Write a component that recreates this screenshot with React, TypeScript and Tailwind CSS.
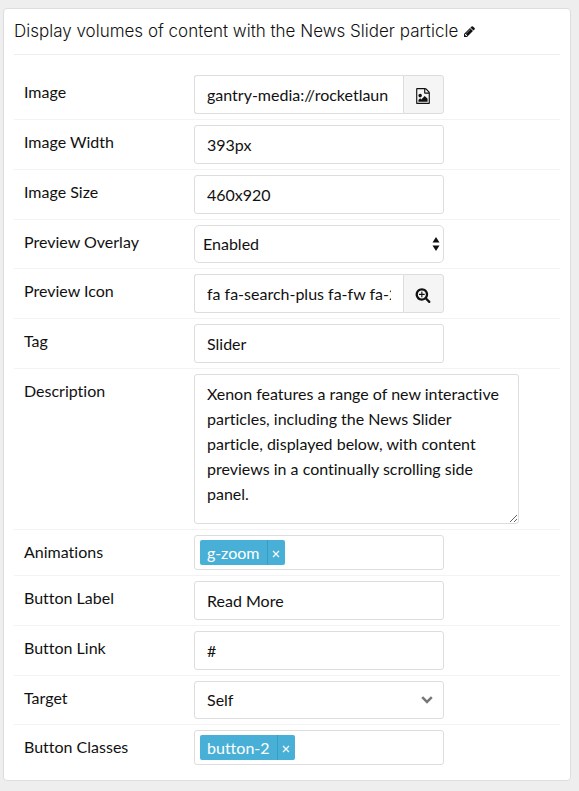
import { useId, type ReactNode } from "react";

const fieldBase =
  "block border border-[#ddd] bg-white text-base text-[#111] outline-none focus:border-[#48b0d7]";

function PencilIcon() {
  return (
    <svg viewBox="0 0 1536 1536" className="size-[11px] fill-current" aria-hidden="true">
      <path d="M363 1408l91-91-235-235-91 91v107h128v128h107zm523-928q0-22-22-22-10 0-17 7l-542 542q-7 7-7 17 0 22 22 22 10 0 17-7l542-542q7-7 7-17zm-54-192l416 416-832 832h-416v-416zm683 96q0 53-37 90l-166 166-416-416 166-165q36-38 90-38 53 0 91 38l235 234q37 39 37 91z" />
    </svg>
  );
}

function FileImageIcon() {
  return (
    <svg viewBox="0 0 1536 1792" className="h-4 w-[14px] fill-current" aria-hidden="true">
      <path d="M1468 380q28 28 48 76t20 88v1152q0 40-28 68t-68 28h-1344q-40 0-68-28t-28-68v-1600q0-40 28-68t68-28h896q40 0 88 20t76 48zm-444-244v376h376q-10-29-22-41l-313-313q-12-12-41-22zm384 1528v-1024h-416q-40 0-68-28t-28-68v-416h-768v1536h1280zm-128-448v320h-1024v-192l192-192 128 128 384-384zm-832-192q-80 0-136-56t-56-136 56-136 136-56 136 56 56 136-56 136-136 56z" />
    </svg>
  );
}

function SearchPlusIcon() {
  return (
    <svg viewBox="0 0 1792 1792" className="size-4 fill-current" aria-hidden="true">
      <path d="M1088 800v64q0 13-9.5 22.5t-22.5 9.5h-224v224q0 13-9.5 22.5t-22.5 9.5h-64q-13 0-22.5-9.5t-9.5-22.5v-224h-224q-13 0-22.5-9.5t-9.5-22.5v-64q0-13 9.5-22.5t22.5-9.5h224v-224q0-13 9.5-22.5t22.5-9.5h64q13 0 22.5 9.5t9.5 22.5v224h224q13 0 22.5 9.5t9.5 22.5zm128 32q0-185-131.5-316.5t-316.5-131.5-316.5 131.5-131.5 316.5 131.5 316.5 316.5 131.5 316.5-131.5 131.5-316.5zm512 832q0 53-37.5 90.5t-90.5 37.5q-54 0-90-38l-343-342q-179 124-399 124-143 0-273.5-55.5t-225-150-150-225-55.5-273.5 55.5-273.5 150-225 225-150 273.5-55.5 273.5 55.5 225 150 150 225 55.5 273.5q0 220-124 399l343 343q37 37 37 90z" />
    </svg>
  );
}

function Row({ label, children }: { label: string; children: (id: string) => ReactNode }) {
  const id = useId();
  return (
    <div className="flex border-b border-[#f3f3f3] py-[5px] last:border-b-0">
      <label htmlFor={id} className="w-[180px] shrink-0 pt-1 pl-[10px] leading-[25px]">
        {label}
      </label>
      <div className="min-w-0 flex-1">{children(id)}</div>
    </div>
  );
}

function TextRow({ label, value }: { label: string; value: string }) {
  return (
    <Row label={label}>
      {(id) => (
        <input
          id={id}
          type="text"
          defaultValue={value}
          className={`${fieldBase} h-[39px] w-full max-w-[250px] rounded-[3px] px-3`}
        />
      )}
    </Row>
  );
}

function PickerRow({
  label,
  value,
  action,
  icon,
}: {
  label: string;
  value: string;
  action: string;
  icon: ReactNode;
}) {
  return (
    <Row label={label}>
      {(id) => (
        <div className="flex w-full max-w-[250px]">
          <input
            id={id}
            type="text"
            defaultValue={value}
            className={`${fieldBase} h-[39px] min-w-0 flex-1 rounded-l-[3px] border-r-0 px-3`}
          />
          <button
            type="button"
            aria-label={action}
            className="flex h-[39px] w-[41px] items-center justify-center rounded-r-[3px] border border-[#ddd] bg-[#f5f5f5] pt-[3px] pr-[2px]"
          >
            {icon}
          </button>
        </div>
      )}
    </Row>
  );
}

function TagsRow({ label, tag }: { label: string; tag: string }) {
  return (
    <Row label={label}>
      {(id) => (
        <div className="flex h-[35px] w-full max-w-[250px] items-center rounded-[3px] border border-[#ddd] px-[5px]">
          <span className="flex h-[25px] shrink-0 rounded-[2px] bg-[#48b0d7] text-white">
            <span className="px-[7px] leading-[25px]">{tag}</span>
            <button
              type="button"
              aria-label={`Remove ${tag}`}
              className="flex w-[18px] items-center justify-center border-l border-[#3a9cc2] pt-[2px]"
            >
              <svg viewBox="0 0 8 8" className="size-2 stroke-current" aria-hidden="true">
                <path d="M1 1l6 6M7 1L1 7" strokeWidth="1.2" />
              </svg>
            </button>
          </span>
          <input id={id} type="text" className="min-w-0 flex-1 px-1 outline-none" />
        </div>
      )}
    </Row>
  );
}

export default function App() {
  return (
    <div className="min-h-screen bg-[#eee] pt-2 pr-2 pb-[10px] pl-[3px] font-['Lato',sans-serif] text-base text-[#111] [font-variant-ligatures:none]">
      <main className="rounded-[4px] border border-[#ddd] bg-white px-[10px] pb-[10px]">
        <header className="mb-[15px] flex h-[46px] items-center gap-[6px] border-b border-[#eee]">
          <h1 className="font-['Inter',sans-serif] text-[17px] leading-[25px] font-light whitespace-nowrap">
            Display volumes of content with the News Slider particle
          </h1>
          <button type="button" aria-label="Edit title">
            <PencilIcon />
          </button>
        </header>

        <form>
          <PickerRow
            label="Image"
            value="gantry-media://rocketlaun"
            action="Choose image"
            icon={<FileImageIcon />}
          />
          <TextRow label="Image Width" value="393px" />
          <TextRow label="Image Size" value="460x920" />
          <Row label="Preview Overlay">
            {(id) => (
              <div className="relative w-full max-w-[250px]">
                <select
                  id={id}
                  className={`${fieldBase} h-[38px] w-full appearance-none rounded-[5px] pr-6 pl-2`}
                >
                  <option>Enabled</option>
                  <option>Disabled</option>
                </select>
                <svg
                  viewBox="0 0 8 14"
                  className="pointer-events-none absolute top-3 right-1 h-[14px] w-2 fill-current"
                  aria-hidden="true"
                >
                  <path d="M4 0l3.5 5.500h-7zM4 14L.5 8.500h7z" />
                </svg>
              </div>
            )}
          </Row>
          <PickerRow
            label="Preview Icon"
            value="fa fa-search-plus fa-fw fa-2x"
            action="Choose icon"
            icon={<SearchPlusIcon />}
          />
          <TextRow label="Tag" value="Slider" />
          <Row label="Description">
            {(id) => (
              <textarea
                id={id}
                defaultValue="Xenon features a range of new interactive particles, including the News Slider particle, displayed below, with content previews in a continually scrolling side panel."
                className={`${fieldBase} h-[150px] w-full max-w-[325px] resize rounded-[3px] px-3 py-[6px] leading-[25px]`}
              />
            )}
          </Row>
          <TagsRow label="Animations" tag="g-zoom" />
          <TextRow label="Button Label" value="Read More" />
          <TextRow label="Button Link" value="#" />
          <Row label="Target">
            {(id) => (
              <div className="relative w-full max-w-[250px]">
                <select
                  id={id}
                  className={`${fieldBase} h-[38px] w-full appearance-none rounded-[3px] pr-8 pl-3`}
                >
                  <option>Self</option>
                  <option>New Window</option>
                </select>
                <svg
                  viewBox="0 0 12 8"
                  className="pointer-events-none absolute top-[15px] right-[11px] h-2 w-3 fill-none stroke-[#777]"
                  aria-hidden="true"
                >
                  <path d="M1.200 1.200L6 6l4.800-4.800" strokeWidth="2.500" />
                </svg>
              </div>
            )}
          </Row>
          <TagsRow label="Button Classes" tag="button-2" />
        </form>
      </main>
    </div>
  );
}
